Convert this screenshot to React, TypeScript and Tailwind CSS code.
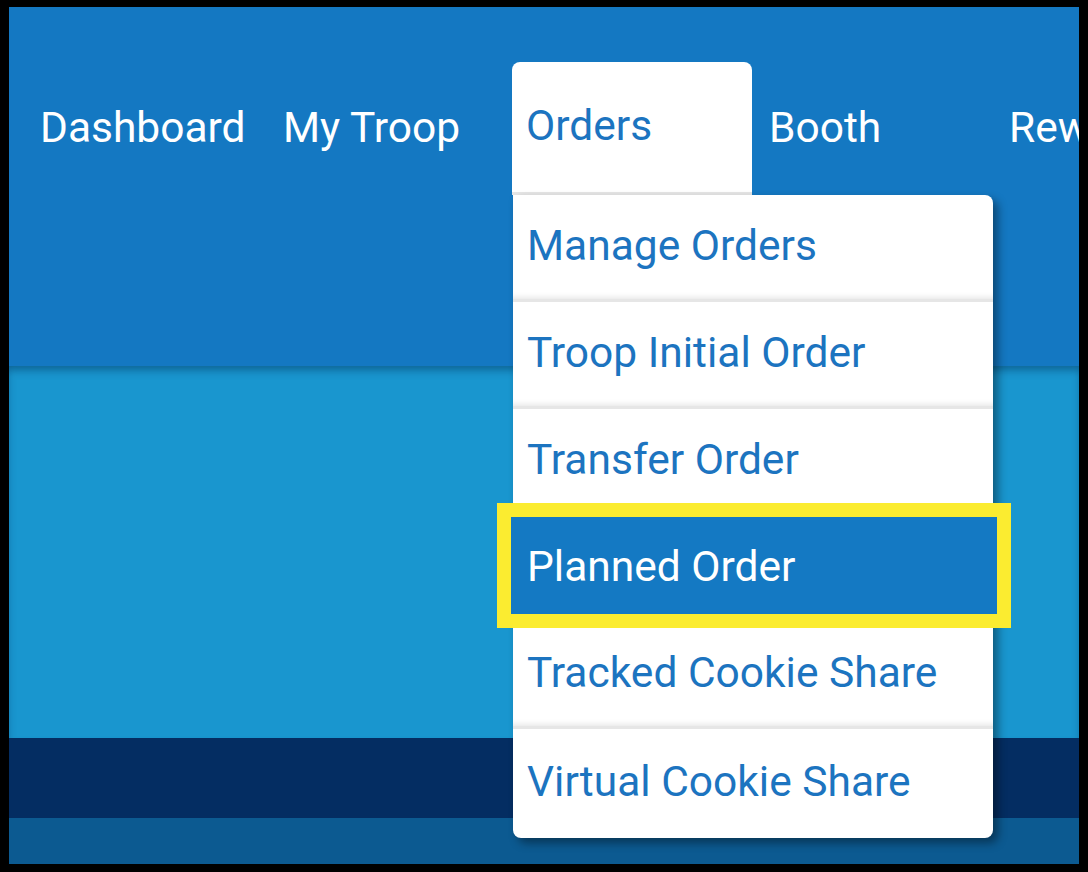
const navItems = ['Dashboard', 'My Troop', 'Orders', 'Booth', 'Rewards']

const menuItems = [
  'Manage Orders',
  'Troop Initial Order',
  'Transfer Order',
  'Planned Order',
  'Tracked Cookie Share',
  'Virtual Cookie Share',
]

export default function App() {
  return (
    <div
      className="w-[1088px] h-[872px] bg-black pt-[7px] pl-[9px] pr-[9px] pb-[8px]"
      style={{ fontFamily: 'Roboto, "Noto Sans", sans-serif' }}
    >
      <div className="relative w-full h-full flex flex-col overflow-hidden">
        {/* Top nav */}
        <div className="h-[359px] bg-[#1478c2] flex items-start pl-[17px] pt-[55px] shrink-0">
          {navItems.map((item) => {
            const active = item === 'Orders'
            return (
              <div
                key={item}
                className={
                  active
                    ? 'w-[240px] h-[133px] shrink-0 bg-white rounded-t-[8px] pl-[14px] flex items-center border-b-[3px] border-[#e6e6e6] text-[#1c74c0] text-[42.5px] leading-none whitespace-nowrap pb-[1px]'
                    : item === 'Booth'
                      ? 'w-[243px] h-[133px] shrink-0 pl-[17px] flex items-center text-white text-[42.5px] leading-none whitespace-nowrap pb-[1px]'
                      : 'w-[243px] h-[133px] shrink-0 pl-[14px] flex items-center text-white text-[42.5px] leading-none whitespace-nowrap pb-[1px]'
                }
              >
                {item}
              </div>
            )
          })}
        </div>

        {/* Body bands */}
        <div className="h-[372px] bg-[#1996cf] shrink-0 shadow-[inset_0_6px_8px_-2px_rgba(0,40,80,0.45)]" />
        <div className="h-[80px] bg-[#042d62] shrink-0" />
        <div className="flex-1 bg-[#0c5a91]" />

        {/* Orders dropdown */}
        <div className="absolute left-[504px] top-[188px] w-[480px] bg-white rounded-b-[8px] rounded-tr-[8px] shadow-[5px_5px_10px_rgba(0,0,0,0.4)] flex flex-col">
          {menuItems.map((item, i) => {
            const last = i === menuItems.length - 1
            if (item === 'Planned Order') {
              return (
                <div key={item} className="relative h-[106px] shrink-0">
                  <div className="absolute -left-[16px] -top-[13px] w-[514px] h-[125px] border-[14px] border-[#fbec30] bg-[#1479c3] flex items-center pl-[16px] pt-[4px] text-white text-[42.5px] leading-none whitespace-nowrap">
                    {item}
                  </div>
                </div>
              )
            }
            return (
              <div
                key={item}
                className={
                  last
                    ? 'h-[109px] shrink-0 flex items-center pl-[14px] pb-[2px] text-[#1c74c0] text-[42.5px] leading-none whitespace-nowrap'
                    : 'h-[107px] shrink-0 flex items-center pl-[14px] pb-[1px] text-[#1c74c0] text-[42.5px] leading-none whitespace-nowrap border-b-[3px] border-[#e6e6e6] shadow-[inset_0_-6px_6px_-5px_rgba(0,0,0,0.12)]'
                }
              >
                {item}
              </div>
            )
          })}
        </div>
      </div>
    </div>
  )
}
